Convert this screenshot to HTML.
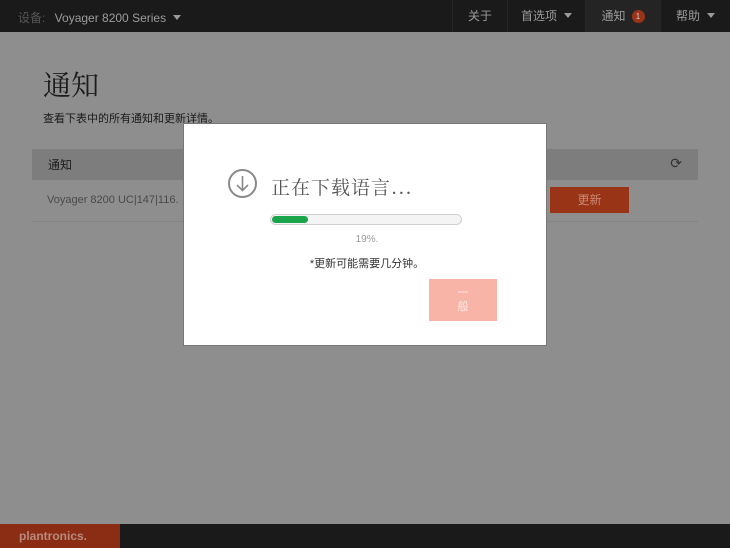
<!DOCTYPE html>
<html><head><meta charset="utf-8"><style>
*{margin:0;padding:0;box-sizing:border-box}
body{width:730px;height:548px;overflow:hidden;background:#8e8e8e;font-family:"Liberation Sans","Noto Sans CJK SC",sans-serif;position:relative}
.nav{position:absolute;left:0;top:0;width:730px;height:32px;background:#1a1a1a;color:#9a9a9a;font-size:12px}
.nav .dev{position:absolute;left:18px;top:9px;color:#555}
.nav .dev b{font-weight:normal;color:#9c9c9c;margin-left:6px}
.tri{display:inline-block;width:0;height:0;border-left:4px solid transparent;border-right:4px solid transparent;border-top:5px solid #9a9a9a;margin-left:7px;vertical-align:2px}
.it{position:absolute;top:0;height:32px;line-height:32px;text-align:center;border-left:1px solid #262626}
.badge{display:inline-block;width:13px;height:13px;border-radius:50%;background:#9b3417;color:#ccc;font-size:8px;line-height:13px;vertical-align:1px;margin-left:6px}
h1{position:absolute;left:43px;top:64px;font-weight:normal;font-size:28px;color:#1c1c1c;font-family:"Noto Serif CJK SC",serif}
.sub{position:absolute;left:43px;top:110px;font-size:11px;color:#1a1a1a}
.th{position:absolute;left:32px;top:149px;width:666px;height:31px;background:#7d7d7d;font-size:12px;color:#1c1c1c;padding:7px 16px}
.row{position:absolute;left:32px;top:180px;width:666px;height:42px;border-bottom:1px solid #848484;font-size:11px;color:#4a4a4a;padding:14px 15px}
.upd{position:absolute;left:550px;top:187px;width:79px;height:26px;background:#9a3416;color:#c98a78;font-size:12px;text-align:center;line-height:26px}
.foot{position:absolute;left:0;top:524px;width:730px;height:24px;background:#1a1a1a}
.logo{position:absolute;left:0;top:0;width:120px;height:24px;background:#8a2d14;color:#b88a7e;font-weight:bold;font-size:12px;padding:5px 0 0 19px}
.modal{position:absolute;left:183px;top:123px;width:364px;height:223px;background:#fff;border:1px solid #777}
.circ{position:absolute;left:44px;top:45px;width:29px;height:29px;border:2px solid #8a8a8a;border-radius:50%}
.ttl{position:absolute;left:87px;top:49px;font-size:19px;color:#555;font-family:"Noto Serif CJK SC",serif;letter-spacing:1px}
.bar{position:absolute;left:86px;top:90px;width:192px;height:11px;border:1px solid #d0d0d0;border-radius:6px;background:#f4f4f4}
.fill{position:absolute;left:1px;top:1px;width:36px;height:7px;border-radius:4px;background:#1aa54a}
.pct{position:absolute;left:0;width:350px;text-align:center;top:110px;font-size:10px;color:#999}
.note{position:absolute;left:0;width:350px;text-align:center;top:131px;font-size:11px;color:#333}
.btn{position:absolute;left:245px;top:155px;width:68px;height:42px;background:#f8b4a6;color:#fde9e4;font-size:11px;text-align:center;line-height:14px;padding-top:7px}
</style></head><body>
<div class="nav">
<div class="dev">设备: <b>Voyager 8200 Series</b><span class="tri"></span></div>
<div class="it" style="left:452px;width:55px">关于</div>
<div class="it" style="left:507px;width:78px">首选项<span class="tri"></span></div>
<div class="it" style="left:585px;width:75px;background:#242424">通知<span class="badge">1</span></div>
<div class="it" style="left:660px;width:70px">帮助<span class="tri"></span></div>
</div>
<h1>通知</h1>
<div class="sub">查看下表中的所有通知和更新详情。</div>
<div class="th">通知<span style="position:absolute;right:16px;top:6px;color:#333;font-size:14px">⟳</span></div>
<div class="row">Voyager 8200 UC|147|116.</div>
<div class="upd">更新</div>
<div class="foot"><div class="logo">plantronics.</div></div>
<div class="modal">
<div class="circ"><svg width="25" height="25" viewBox="0 0 25 25" style="position:absolute;left:0;top:0"><path d="M12.5 5V19M7 14l5.5 5.5L18 14" stroke="#8a8a8a" stroke-width="1.6" fill="none"/></svg></div>
<div class="ttl">正在下载语言...</div>
<div class="bar"><div class="fill"></div></div>
<div class="pct" style="left:8px">19%.</div>
<div class="note" style="left:8px">*更新可能需要几分钟。</div>
<div class="btn">一<br>般</div>
</div>
</body></html>
